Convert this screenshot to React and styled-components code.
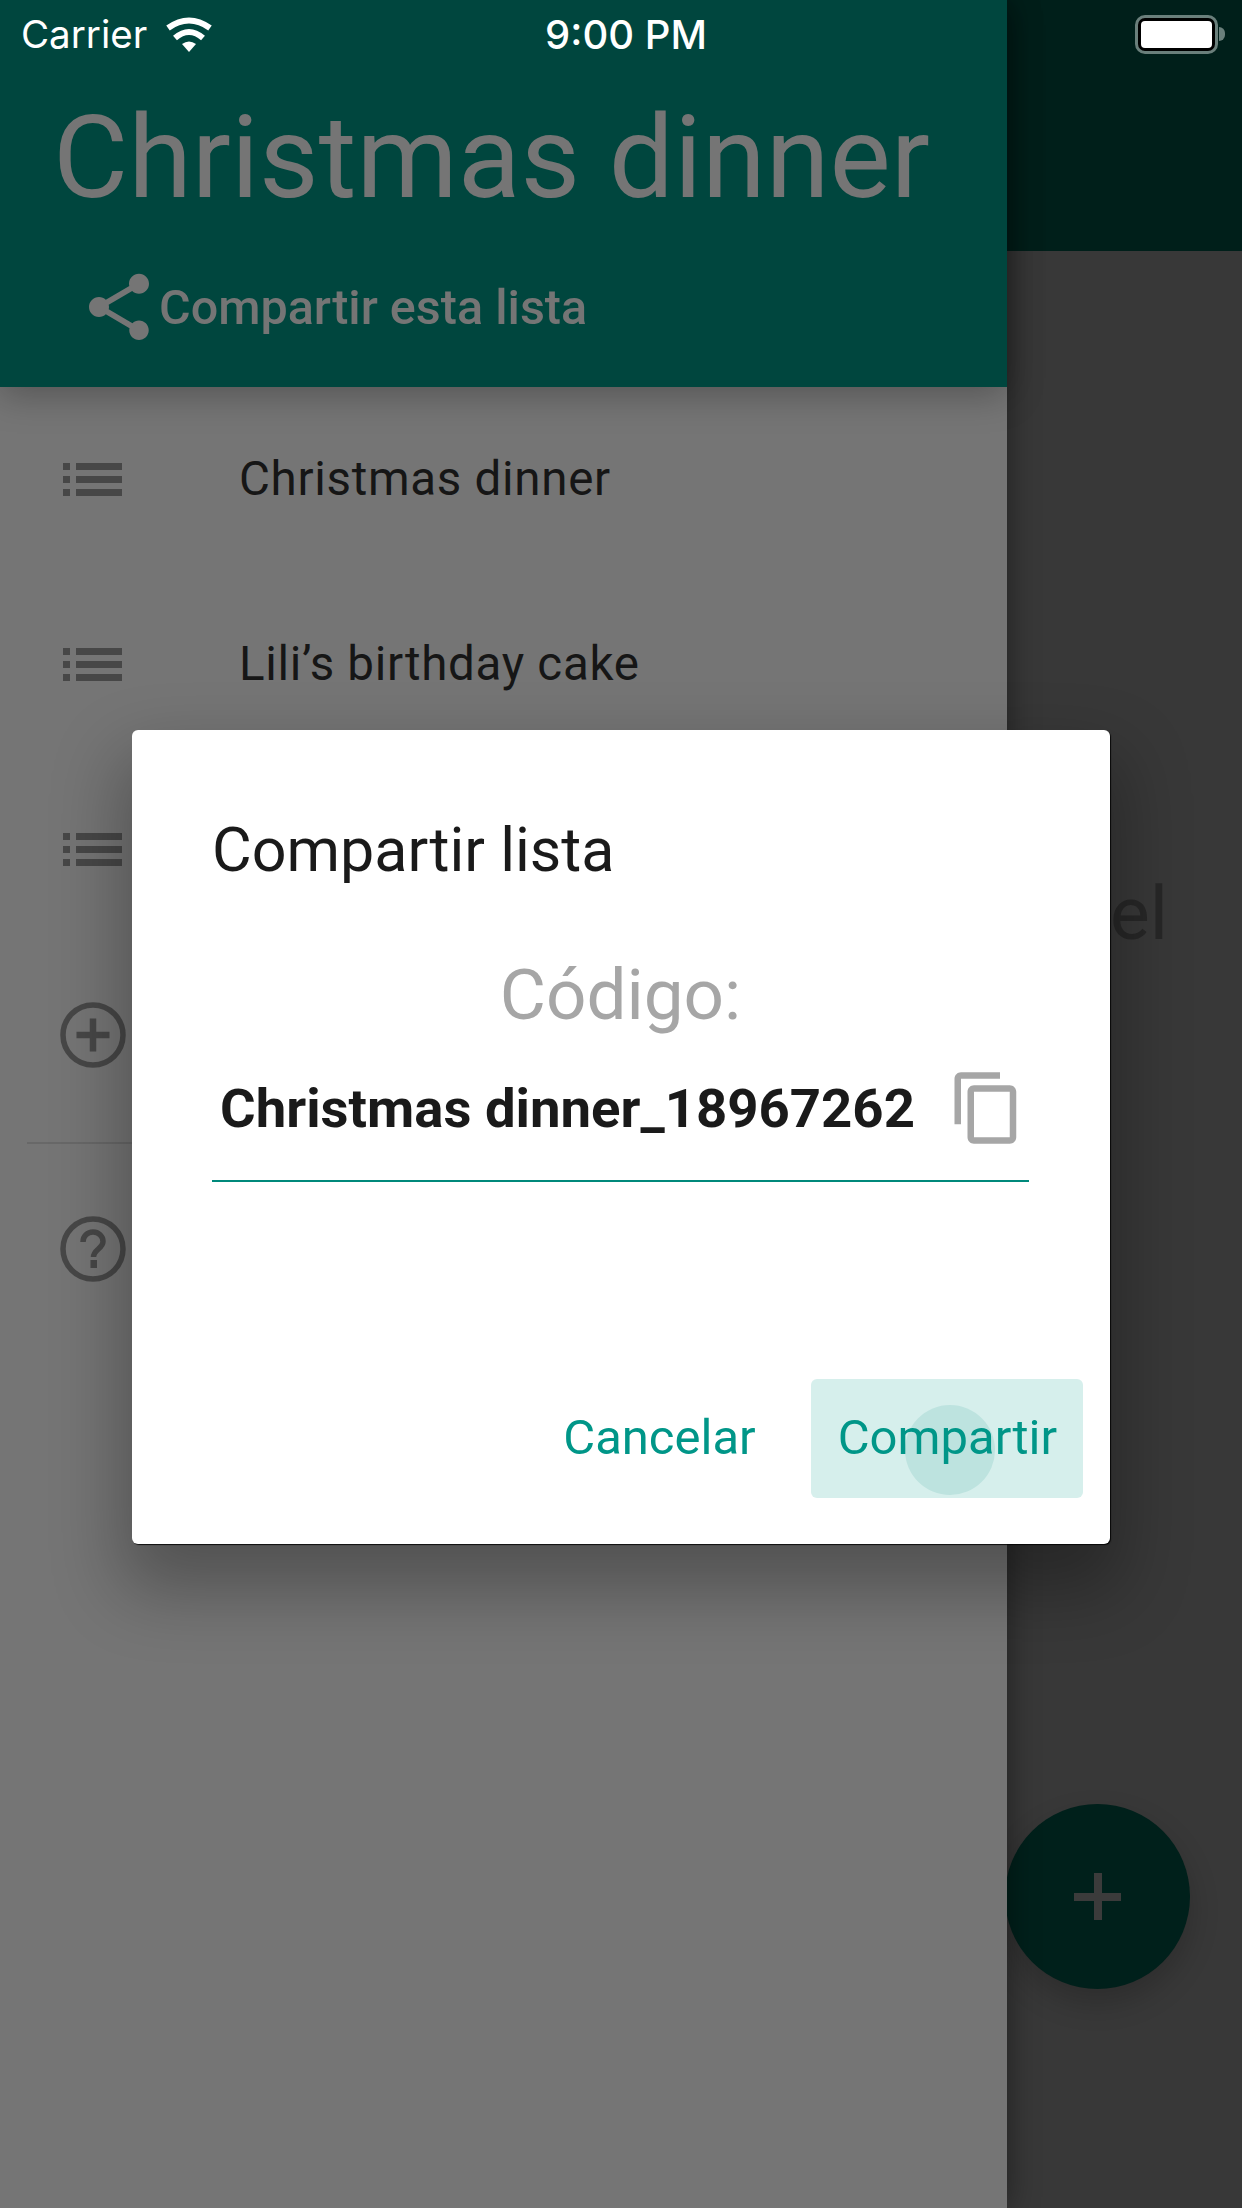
import styled, { createGlobalStyle } from "styled-components";

const GlobalStyle = createGlobalStyle`
  html, body {
    margin: 0;
    padding: 0;
    background: #383838;
  }
  * {
    box-sizing: border-box;
  }
`;

const ListIcon = () => (
  <ListGlyph width="59" height="33" viewBox="0 0 59 33" fill="#474747">
    <rect x="0" y="0" width="7" height="7" />
    <rect x="0" y="13" width="7" height="7" />
    <rect x="0" y="26" width="7" height="7" />
    <rect x="13" y="0" width="46" height="7" />
    <rect x="13" y="13" width="46" height="7" />
    <rect x="13" y="26" width="46" height="7" />
  </ListGlyph>
);

const PlusCircleIcon = () => (
  <svg width="66" height="66" viewBox="0 0 66 66" fill="none" stroke="#474747" strokeWidth="5.5">
    <circle cx="33" cy="33" r="30" />
    <path d="M33 16.500v33M16.500 33h33" strokeWidth="6.5" />
  </svg>
);

const HelpIcon = () => (
  <svg width="66" height="66" viewBox="0 0 66 66" fill="none" stroke="#474747" strokeWidth="5.5">
    <circle cx="33" cy="33" r="30" />
    <path d="M23 26c0-6 4.500-10 10-10s10 4 10 9.500c0 7-9.500 8-9.500 15.500" />
    <rect x="30.500" y="44" width="6.500" height="8" fill="#474747" stroke="none" />
  </svg>
);

const ShareIcon = () => (
  <svg width="80" height="80" viewBox="0 0 24 24" fill="#757575">
    <path d="M18 16.08c-.76 0-1.44.3-1.96.77L8.91 12.7c.05-.23.09-.46.09-.7s-.04-.47-.09-.7l7.05-4.11c.54.5 1.25.81 2.04.81 1.66 0 3-1.34 3-3s-1.34-3-3-3-3 1.34-3 3c0 .24.04.47.09.7L8.04 9.81C7.5 9.31 6.79 9 6 9c-1.66 0-3 1.34-3 3s1.34 3 3 3c.79 0 1.5-.31 2.04-.81l7.12 4.16c-.05.21-.08.43-.08.65 0 1.61 1.31 2.92 2.92 2.92 1.61 0 2.92-1.31 2.92-2.92s-1.31-2.92-2.92-2.92z" />
  </svg>
);

const CopyIcon = () => (
  <svg width="78" height="78" viewBox="0 0 24 24" fill="#a6a6a6">
    <path d="M16 1H4c-1.1 0-2 .9-2 2v14h2V3h12V1zm3 4H8c-1.1 0-2 .9-2 2v14c0 1.100.9 2 2 2h11c1.100 0 2-.9 2-2V7c0-1.100-.9-2-2-2zm0 16H8V7h11v14z" />
  </svg>
);

const WifiIcon = () => (
  <svg width="48" height="35" viewBox="0 0 48 35" fill="none" stroke="#fff" strokeWidth="6">
    <path d="M3 11Q24-4 45 11" />
    <path d="M10 21Q24 9 38 21" />
    <path d="M24 35l-7-8q7-5 14 0z" fill="#fff" stroke="none" />
  </svg>
);

const App = () => {
  return (
    <Screen>
      <GlobalStyle />
      <Drawer>
        <DrawerHeader>
          <DrawerTitle>Christmas dinner</DrawerTitle>
          <ShareRow>
            <ShareIcon />
            <ShareLabel>Compartir esta lista</ShareLabel>
          </ShareRow>
        </DrawerHeader>
        <DrawerRow><ListIcon /><RowLabel>Christmas dinner</RowLabel></DrawerRow>
        <DrawerRow><ListIcon /><RowLabel>Lili’s birthday cake</RowLabel></DrawerRow>
        <DrawerRow><ListIcon /></DrawerRow>
        <DrawerRow><PlusCircleIcon /></DrawerRow>
        <Divider />
        <DrawerRow><HelpIcon /></DrawerRow>
      </Drawer>

      <Main>
        <AppBar />
        <MainBody>
          <BehindText>el</BehindText>
        </MainBody>
        <Fab><FabPlus /></Fab>
      </Main>

      <StatusBar>
        <StatusLeft>
          <span>Carrier</span>
          <WifiIcon />
        </StatusLeft>
        <StatusTime>9:00 PM</StatusTime>
        <StatusRight>
          <Battery><BatteryFill /></Battery>
          <BatteryNub />
        </StatusRight>
      </StatusBar>

      <Dialog>
        <DialogTitle>Compartir lista</DialogTitle>
        <CodeLabel>Código:</CodeLabel>
        <CodeField>
          <CodeValue>Christmas dinner_18967262</CodeValue>
          <CopyIcon />
        </CodeField>
        <DialogActions>
          <ActionButton>Cancelar</ActionButton>
          <ActionButton $active>
            <Ripple />
            <ActionLabel>Compartir</ActionLabel>
          </ActionButton>
        </DialogActions>
      </Dialog>
    </Screen>
  );
};

export default App;

const Screen = styled.div`
  position: relative;
  display: flex;
  width: 1242px;
  height: 2208px;
  overflow: hidden;
  font-family: Roboto, "Liberation Sans", sans-serif;
  background: #383838;
`;

const Drawer = styled.aside`
  position: relative;
  z-index: 2;
  width: 1007px;
  flex-shrink: 0;
  background: #757575;
  box-shadow: 0 0 30px rgba(0, 0, 0, 0.45);
`;

const DrawerHeader = styled.header`
  height: 387px;
  padding: 94px 0 0 53px;
  background: #00463e;
  box-shadow: 0 8px 34px rgba(0, 0, 0, 0.28);
`;

const DrawerTitle = styled.h1`
  margin: 0;
  font-size: 115.500px;
  line-height: 128px;
  font-weight: 400;
  color: #757575;
  white-space: nowrap;
`;

const ShareRow = styled.div`
  display: flex;
  align-items: center;
  margin: 45px 0 0 26px;
`;

const ShareLabel = styled.span`
  font-size: 48.500px;
  font-weight: 500;
  color: #757575;
`;

const DrawerRow = styled.div`
  display: flex;
  align-items: center;
  height: 185px;
  padding-left: 60px;
`;

const ListGlyph = styled.svg`
  flex: 0 0 auto;
  margin-left: 3px;
`;

const RowLabel = styled.span`
  margin: -1px 0 0 117px;
  font-size: 47.500px;
  letter-spacing: 0.7px;
  color: #161616;
`;

const Divider = styled.hr`
  height: 2px;
  margin: 15px 0 12px 27px;
  border: 0;
  background: #686868;
`;

const Main = styled.main`
  position: relative;
  flex: 1;
  display: flex;
  flex-direction: column;
`;

const AppBar = styled.div`
  height: 251px;
  background: #001f1a;
`;

const MainBody = styled.div`
  flex: 1;
  padding: 617px 0 0 103px;
`;

const BehindText = styled.span`
  font-size: 75px;
  line-height: 90px;
  color: #272727;
`;

const Fab = styled.div`
  position: absolute;
  left: -2px;
  top: 1804px;
  display: flex;
  align-items: center;
  justify-content: center;
  width: 185px;
  height: 185px;
  border-radius: 50%;
  background: #00201b;
  box-shadow: 0 14px 30px rgba(0, 0, 0, 0.2);
`;

const FabPlus = styled.div`
  width: 47px;
  height: 47px;
  background:
    linear-gradient(#3b3b3b, #3b3b3b) center / 100% 8px no-repeat,
    linear-gradient(#3b3b3b, #3b3b3b) center / 8px 100% no-repeat;
`;

const StatusBar = styled.div`
  position: absolute;
  z-index: 3;
  top: 0;
  left: 0;
  right: 0;
  display: grid;
  grid-template-columns: 1fr auto 1fr;
  align-items: center;
  height: 68px;
  padding: 0 17px 0 21px;
  font-family: Inter, "Liberation Sans", sans-serif;
  font-size: 38.500px;
  color: #fff;
`;

const StatusLeft = styled.div`
  display: flex;
  align-items: center;
  gap: 18px;
`;

const StatusTime = styled.div`
  margin-left: 6px;
  font-size: 40px;
  font-weight: 500;
`;

const StatusRight = styled.div`
  display: flex;
  align-items: center;
  justify-content: flex-end;
`;

const Battery = styled.div`
  width: 83px;
  height: 39px;
  padding: 3px;
  border: 3px solid #6a7f7b;
  border-radius: 10px;
  background: #000;
`;

const BatteryFill = styled.div`
  width: 100%;
  height: 100%;
  border-radius: 4px;
  background: #fff;
`;

const BatteryNub = styled.div`
  width: 6px;
  height: 14px;
  margin-left: 1px;
  border-radius: 0 6px 6px 0;
  background: #6a7f7b;
`;

const Dialog = styled.section`
  position: absolute;
  z-index: 4;
  top: 730px;
  left: 132px;
  display: flex;
  flex-direction: column;
  width: 978px;
  height: 814px;
  padding: 0 27px 46px 80px;
  border-radius: 6px;
  background: #fff;
  box-shadow:
    1px 1px 1px rgba(0, 0, 0, 0.85),
    0 36px 70px 10px rgba(0, 0, 0, 0.3);
`;

const DialogTitle = styled.h2`
  margin: 84px 0 0;
  font-size: 61px;
  line-height: 72px;
  font-weight: 400;
  color: #1a1a1a;
`;

const CodeLabel = styled.div`
  width: 817px;
  margin-top: 71px;
  font-size: 71px;
  line-height: 76px;
  text-align: center;
  color: #a6a6a6;
`;

const CodeField = styled.div`
  display: flex;
  align-items: center;
  justify-content: space-between;
  width: 817px;
  height: 147px;
  margin-top: 2px;
  padding: 0 3px 0 8px;
  border-bottom: 2px solid #00897b;
`;

const CodeValue = styled.span`
  font-size: 54.500px;
  font-weight: 700;
  color: #1a1a1a;
  white-space: nowrap;
`;

const DialogActions = styled.div`
  display: flex;
  justify-content: flex-end;
  align-items: center;
  gap: 55px;
  margin-top: auto;
`;

const ActionButton = styled.div`
  position: relative;
  display: flex;
  align-items: center;
  height: 119px;
  padding: ${(p) => (p.$active ? "0 26px 3px 27px" : "0 0 3px")};
  border-radius: 6px;
  overflow: hidden;
  font-size: 49px;
  color: #009688;
  background: ${(p) => (p.$active ? "#d6efec" : "transparent")};
`;

const Ripple = styled.span`
  position: absolute;
  top: 26px;
  left: 94px;
  width: 90px;
  height: 90px;
  border-radius: 50%;
  background: #bde3df;
`;

const ActionLabel = styled.span`
  position: relative;
`;
